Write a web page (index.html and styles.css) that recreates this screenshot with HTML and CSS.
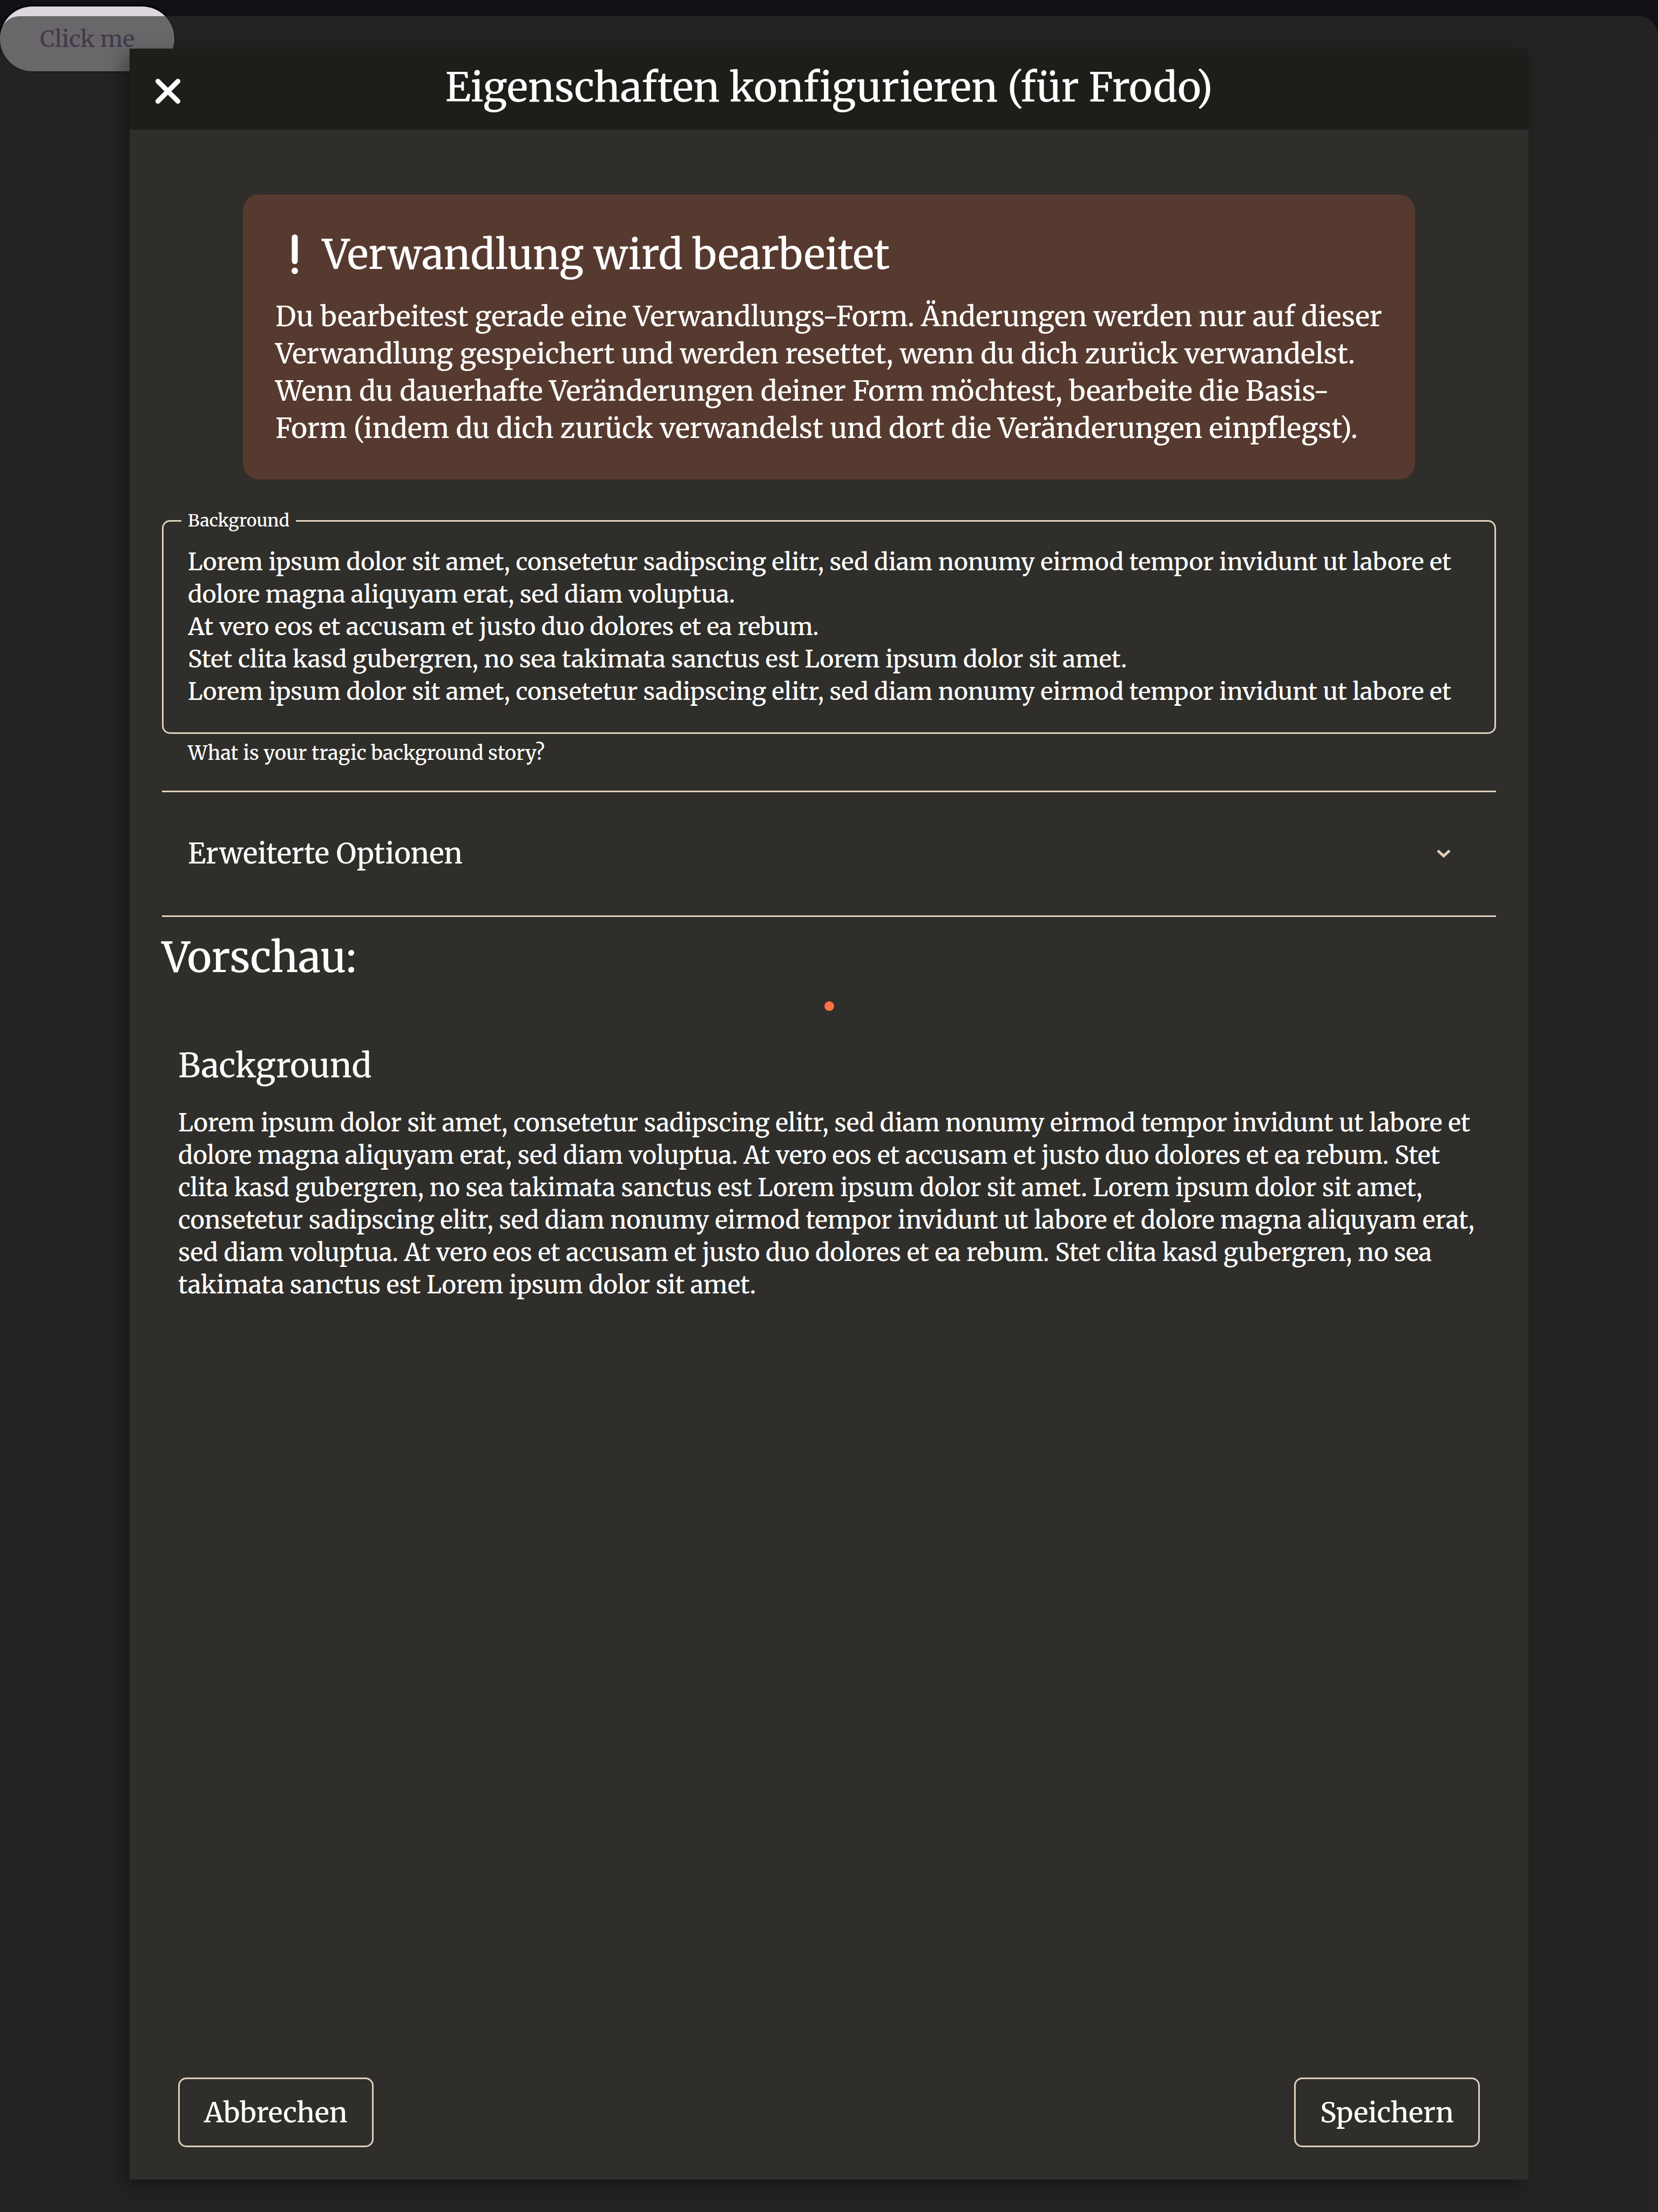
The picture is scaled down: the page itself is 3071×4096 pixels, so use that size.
FILE: index.html
```html
<!DOCTYPE html>
<html lang="de">
<head>
<meta charset="utf-8">
<meta name="viewport" content="width=device-width, initial-scale=1">
<title>Eigenschaften konfigurieren</title>
<link rel="stylesheet" href="styles.css">
</head>
<body>
<button class="trigger" type="button">Click me</button>
<div class="backdrop">
  <section class="dialog" role="dialog" aria-modal="true" aria-labelledby="dialog-title">
    <header class="dialog-header">
      <button class="close" type="button" aria-label="Schließen">
        <svg class="close-icon" viewBox="0 0 46 46" aria-hidden="true"><path d="M4.500 4.500L41.500 41.500M41.500 4.500L4.500 41.500"/></svg>
      </button>
      <h1 class="dialog-title" id="dialog-title">Eigenschaften konfigurieren (für Frodo)</h1>
    </header>
    <div class="dialog-body">
      <div class="notice">
        <h2 class="notice-title">
          <svg class="notice-icon" viewBox="0 0 12 74" aria-hidden="true"><path d="M6 5.500V49.500"/><circle cx="6" cy="67.500" r="6"/></svg>
          Verwandlung wird bearbeitet
        </h2>
        <p class="notice-text">Du bearbeitest gerade eine Verwandlungs-Form. Änderungen werden nur auf dieser<br>Verwandlung gespeichert und werden resettet, wenn du dich zurück verwandelst.<br>Wenn du dauerhafte Veränderungen deiner Form möchtest, bearbeite die Basis-<br>Form (indem du dich zurück verwandelst und dort die Veränderungen einpflegst).</p>
      </div>
      <fieldset class="field">
        <legend class="field-legend"><label for="background">Background</label></legend>
        <textarea class="field-input" id="background" rows="5" aria-describedby="background-hint">Lorem ipsum dolor sit amet, consetetur sadipscing elitr, sed diam nonumy eirmod tempor invidunt ut labore et dolore magna aliquyam erat, sed diam voluptua.
At vero eos et accusam et justo duo dolores et ea rebum.
Stet clita kasd gubergren, no sea takimata sanctus est Lorem ipsum dolor sit amet.
Lorem ipsum dolor sit amet, consetetur sadipscing elitr, sed diam nonumy eirmod tempor invidunt ut labore et</textarea>
      </fieldset>
      <p class="field-hint" id="background-hint">What is your tragic background story?</p>
      <button class="expander" type="button" aria-expanded="false">
        <span>Erweiterte Optionen</span>
        <svg class="chevron" viewBox="0 0 26 16" aria-hidden="true"><path d="M2 2L13 12L24 2"/></svg>
      </button>
      <h2 class="preview-title">Vorschau:</h2>
      <div class="divider-dot"></div>
      <article class="preview">
        <h3 class="preview-heading">Background</h3>
        <p class="preview-text">Lorem ipsum dolor sit amet, consetetur sadipscing elitr, sed diam nonumy eirmod tempor invidunt ut labore et<br>dolore magna aliquyam erat, sed diam voluptua. At vero eos et accusam et justo duo dolores et ea rebum. Stet<br>clita kasd gubergren, no sea takimata sanctus est Lorem ipsum dolor sit amet. Lorem ipsum dolor sit amet,<br>consetetur sadipscing elitr, sed diam nonumy eirmod tempor invidunt ut labore et dolore magna aliquyam erat,<br>sed diam voluptua. At vero eos et accusam et justo duo dolores et ea rebum. Stet clita kasd gubergren, no sea<br>takimata sanctus est Lorem ipsum dolor sit amet.</p>
      </article>
    </div>
    <footer class="dialog-footer">
      <button class="action" type="button">Abbrechen</button>
      <button class="action" type="button">Speichern</button>
    </footer>
  </section>
</div>
</body>
</html>
```
FILE: styles.css
```css
* {
  box-sizing: border-box;
}

:root {
  --line: #e0d0bc;
  --surface: #2f2e2a;
  --text: #fff;
}

body {
  margin: 0;
  min-height: 100vh;
  padding-top: 12px;
  background: #121015;
  color: var(--text);
  font-family: Merriweather, "DejaVu Serif Condensed", "DejaVu Serif", serif;
  font-size: 45px;
  font-weight: 500;
  line-height: 60px;
}

button,
textarea {
  font: inherit;
  color: inherit;
}

h1,
h2,
h3,
p {
  margin: 0;
  font-weight: inherit;
}

.trigger {
  display: block;
  height: 120px;
  padding: 0 74px;
  border: 0;
  border-radius: 60px;
  background: #dcd6df;
  box-shadow: 0 0 0 3px #000;
  color: #68538a;
  font-size: 42px;
}

.backdrop {
  position: absolute;
  inset: 30px 0 0;
  display: flex;
  padding: 60px 240px;
  border-radius: 36px 36px 0 0;
  background: rgba(46, 46, 44, 0.66);
}

.dialog {
  flex: 1;
  min-width: 0;
  display: flex;
  flex-direction: column;
  background: var(--surface);
  box-shadow: -12px 12px 30px rgba(0, 0, 0, 0.35);
}

.dialog-header {
  display: grid;
  grid-template-columns: 48px 1fr 48px;
  align-items: center;
  height: 150px;
  padding: 0 48px;
  background: #1e1d1a;
}

.close {
  display: flex;
  padding: 8px 0 0;
  border: 0;
  background: none;
}

.close-icon {
  width: 46px;
  height: 46px;
  fill: none;
  stroke: currentColor;
  stroke-width: 9;
  stroke-linecap: round;
}

.dialog-title {
  padding-bottom: 6px;
  font-size: 74px;
  line-height: 90px;
  text-align: center;
}

.dialog-body {
  flex: 1;
  display: flex;
  flex-direction: column;
  padding: 120px 60px 0;
}

.notice {
  margin: 0 150px;
  padding: 60px;
  border-radius: 30px;
  background: #573a2f;
}

.notice-title {
  display: flex;
  align-items: center;
  gap: 45px;
  height: 102px;
  padding-left: 30px;
  font-size: 75px;
}

.notice-icon {
  width: 12px;
  height: 74px;
  fill: currentColor;
  stroke: currentColor;
}

.notice-icon path {
  stroke-width: 11;
  stroke-linecap: round;
}

.notice-icon circle {
  stroke: none;
}

.notice-text {
  padding: 30px 0 0;
  font-size: 51px;
  line-height: 69px;
  white-space: nowrap;
}

.field {
  min-width: 0;
  margin: 60px 0 0;
  padding: 30px 45px 45px;
  border: 3px solid var(--line);
  border-radius: 15px;
}

.field-legend {
  margin-left: -12px;
  padding: 0 12px;
  font-size: 32px;
  line-height: 33px;
}

.field-input {
  display: block;
  width: 100%;
  height: 300px;
  padding: 0;
  border: 0;
  outline: 0;
  background: none;
  font-size: 44px;
  overflow: hidden;
  resize: none;
}

.field-hint {
  padding: 6px 48px 0;
  font-size: 36px;
}

.expander {
  display: flex;
  align-items: center;
  justify-content: space-between;
  height: 234px;
  margin-top: 39px;
  padding: 0 84px 0 48px;
  border: solid var(--line);
  border-width: 3px 0;
  background: none;
  font-size: 52px;
}

.chevron {
  width: 26px;
  height: 16px;
  fill: none;
  stroke: var(--line);
  stroke-width: 5;
}

.preview-title {
  padding-top: 27px;
  font-size: 77px;
  line-height: 96px;
}

.divider-dot {
  align-self: center;
  width: 18px;
  height: 18px;
  margin-top: 33px;
  border-radius: 50%;
  background: #ff7043;
}

.preview {
  padding: 60px 30px 0;
}

.preview-heading {
  font-size: 61px;
  line-height: 84px;
}

.preview-text {
  padding-top: 33px;
  white-space: nowrap;
}

.dialog-footer {
  display: flex;
  justify-content: space-between;
  padding: 60px 90px;
}

.action {
  height: 129px;
  padding: 0 45px;
  border: 3px solid var(--line);
  border-radius: 15px;
  background: none;
  font-size: 51px;
}
```
